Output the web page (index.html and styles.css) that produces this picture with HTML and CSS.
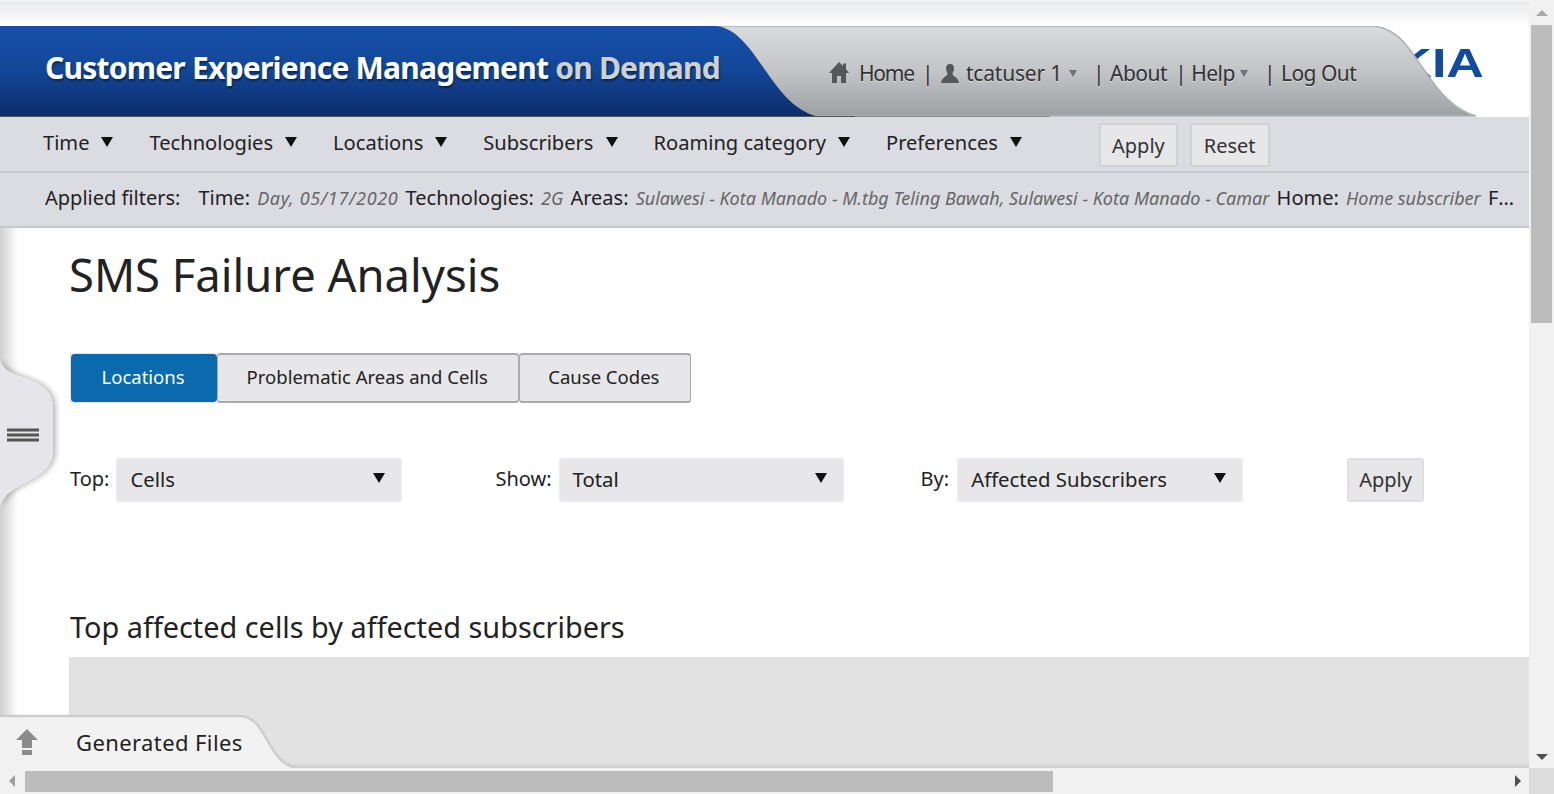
FILE: index.html
```html
<!DOCTYPE html>
<html>
<head>
    <title>SMS Failure Analysis</title>
    <link rel="stylesheet" href="styles.css">
</head>
<body>
    <div class="window">
        <div class="viewport">
            <div class="page">
                <div class="topstrip"></div>
                <header class="banner">
                    <div class="logo">KIA</div>
                    <svg class="swoop" width="1529" height="91" viewBox="0 0 1529 91">
                        <defs>
                            <linearGradient id="blue" x1="0" y1="0" x2="0" y2="1">
                                <stop offset="0" stop-color="#1550aa"/>
                                <stop offset="0.5" stop-color="#124797"/>
                                <stop offset="1" stop-color="#0c2c6c"/>
                            </linearGradient>
                            <linearGradient id="grey" x1="0" y1="0" x2="0" y2="1">
                                <stop offset="0" stop-color="#dadbdd"/>
                                <stop offset="0.5" stop-color="#c2c4c6"/>
                                <stop offset="1" stop-color="#9da1a4"/>
                            </linearGradient>
                        </defs>
                        <path d="M700 0 H1372 C1400 2 1410 25 1425 45 C1440 68 1455 84 1476 90 H800 Z" fill="url(#grey)" stroke="#aeb0b2" stroke-width="1.500"/>
                        <path d="M0 0 H716 C756 4 770 78 816 90 H0 Z" fill="url(#blue)"/>
                        <path d="M0 90.500 H855" stroke="#555" stroke-width="1"/>
                        <path d="M855 90.500 H1050" stroke="#888" stroke-width="1"/>
                    </svg>
                    <h1 class="apptitle">Customer Experience Management <span class="ondemand">on Demand</span></h1>
                    <div class="usermenu">
                        <svg class="ico ico-home" width="20" height="22" viewBox="0 0 20 22"><path d="M10 0 L14 4 V1.500 H17 V7 L20 11 H17 V21 H12 V14 H8 V21 H3 V11 H0 Z" fill="#55585a"/></svg>
                        <span class="home">Home</span>
                        <span class="sep">|</span>
                        <svg class="ico ico-user" width="18" height="19" viewBox="0 0 18 19"><path d="M9 0 C12 0 13 2 13 4.500 C13 7 11.500 8.500 11.500 10 C11.500 12 17 13 18 19 H0 C1 13 6.500 12 6.500 10 C6.500 8.500 5 7 5 4.500 C5 2 6 0 9 0 Z" fill="#55585a"/></svg>
                        <span class="uname">tcatuser 1</span>
                        <span class="caret"></span>
                        <span class="sep sep-wide">|</span>
                        <span>About</span>
                        <span class="sep">|</span>
                        <span>Help</span>
                        <span class="caret caret-help"></span>
                        <span class="sep sep-wide">|</span>
                        <span>Log Out</span>
                    </div>
                </header>
                <nav class="filterbar">
                    <ul class="filtermenu">
                        <li>Time<span class="arrow"></span></li>
                        <li>Technologies<span class="arrow"></span></li>
                        <li>Locations<span class="arrow"></span></li>
                        <li>Subscribers<span class="arrow"></span></li>
                        <li>Roaming category<span class="arrow"></span></li>
                        <li>Preferences<span class="arrow"></span></li>
                    </ul>
                    <button class="btn">Apply</button>
                    <button class="btn btn-reset">Reset</button>
                </nav>
                <div class="applied">
                    <span class="applied-title">Applied filters:</span>
                    <div class="applied-list">Time: <i class="date">Day, 05/17/2020</i> Technologies: <i>2G</i> Areas: <i>Sulawesi - Kota Manado - M.tbg Teling Bawah, Sulawesi - Kota Manado - Camar</i> Home: <i>Home subscriber</i> Failure: <i>All</i></div>
                </div>
                <main class="content">
                    <h2 class="pagetitle">SMS Failure Analysis</h2>
                    <div class="tabs">
                        <div class="tab tab-active">Locations</div>
                        <div class="tab tab-wide">Problematic Areas and Cells</div>
                        <div class="tab tab-last">Cause Codes</div>
                    </div>
                    <div class="controls">
                        <div class="ctl ctl-top"><span class="ctl-label">Top:</span>
                            <span class="sel"><span>Cells</span><span class="arrow sel-arrow"></span></span>
                        </div>
                        <div class="ctl ctl-show"><span class="ctl-label">Show:</span>
                            <span class="sel"><span>Total</span><span class="arrow sel-arrow"></span></span>
                        </div>
                        <div class="ctl ctl-by"><span class="ctl-label">By:</span>
                            <span class="sel"><span>Affected Subscribers</span><span class="arrow sel-arrow"></span></span>
                        </div>
                        <button class="btn btn-apply">Apply</button>
                    </div>
                    <h3 class="charttitle">Top affected cells by affected subscribers</h3>
                    <div class="chart"></div>
                </main>
            </div>

            <div class="sideshadow"></div>
            <svg class="handle" width="60" height="160" viewBox="0 0 60 160">
                <defs>
                    <filter id="soft" x="-30%" y="-10%" width="160%" height="120%"><feDropShadow dx="2" dy="0" stdDeviation="3" flood-color="#000" flood-opacity="0.35"/></filter>
                </defs>
                <path d="M0 2 C6 25 53 15 53 50 V92 C53 125 6 122 0 150 Z" fill="#e6e6ea" filter="url(#soft)"/>
                <path d="M7 72 H39 M7 77 H39 M7 82 H39" stroke="#555" stroke-width="3"/>
            </svg>

            <div class="generated">
                <svg class="gen-shape" width="310" height="60" viewBox="0 0 310 60">
                    <path d="M0 8 H240 C268 9 266 55 297 60 H0 Z" fill="#f2f2f2"/>
                    <path d="M0 8 H240 C268 9 266 55 297 60" fill="none" stroke="#cdcdcd" stroke-width="2.500"/>
                </svg>
                <svg class="gen-icon" width="22" height="26" viewBox="0 0 22 26"><path d="M11 0 L22 11 H16 V19 H6 V11 H0 Z M6 21 H16 V26 H6 Z" fill="#8b8b8b"/></svg>
                <span class="gen-label">Generated Files</span>
            </div>
        </div>

        <div class="vscroll">
            <span class="sb-btn sb-up"></span>
            <div class="vthumb"></div>
            <span class="sb-btn sb-down"></span>
        </div>

        <div class="hscroll">
            <span class="sb-btn sb-left"></span>
            <div class="hthumb"></div>
            <span class="sb-btn sb-right"></span>
        </div>
        <div class="corner"></div>
    </div>
</body>
</html>
```

FILE: styles.css
```css
* {
    box-sizing: border-box;
}
html, body {
    margin: 0;
    height: 100%;
    overflow: hidden;
}
body {
    background-color: white;
    color: #222;
    font-family: "Noto Sans", "Open Sans", sans-serif;
}
.window {
    display: grid;
    grid-template-columns: 1529px 25px;
    grid-template-rows: 768px 26px;
    height: 794px;
}

/* page area */
.viewport {
    position: relative;
    overflow: hidden;
}
.topstrip {
    height: 26px;
    background: linear-gradient(#e9eaec, #ffffff);
    border-top: 2px solid #f4f4f4;
}
.banner {
    position: relative;
    height: 91px;
    display: flex;
    align-items: flex-start;
}
.swoop {
    position: absolute;
    left: 0;
    top: 0;
}
.logo {
    position: absolute;
    right: 45px;
    top: 17px;
    color: #124aa0;
    font-family: "Liberation Sans", sans-serif;
    font-weight: bold;
    font-size: 40px;
    line-height: 40px;
    transform: scaleX(1.3);
    transform-origin: right;
}
.apptitle {
    position: relative;
    margin: 20px 0 0 45px;
    width: 700px;
    font-size: 30px;
    line-height: 44px;
    font-weight: 700;
    letter-spacing: -0.77px;
    color: white;
    white-space: nowrap;
    text-shadow: 1px 2px 2px rgba(0, 0, 0, 0.45);
}
.ondemand {
    color: #cfd1d3;
}
.usermenu {
    position: relative;
    margin: 33px 0 0 84px;
    display: flex;
    align-items: center;
    gap: 7px;
    font-size: 21px;
    line-height: 28px;
    color: #333;
    white-space: nowrap;
    letter-spacing: -0.5px;
    text-shadow: 0 1px 0 rgba(255, 255, 255, 0.5);
}
.ico {
    flex: none;
}
.ico-home {
    margin-right: 3px;
}
.ico-user {
    margin-left: 3px;
}
.home {
    letter-spacing: -1.2px;
}
.uname {
    letter-spacing: -0.2px;
}
.caret {
    width: 0;
    height: 0;
    border-style: solid;
    border-width: 7px 4.500px 0;
    border-color: #707275 transparent transparent;
}
.caret-help {
    margin-left: -2px;
}
.sep {
    width: 8px;
    margin: 0 1px;
    text-align: center;
}
.sep-wide {
    margin: 0 2px 0 9px;
}

/* filter bars */
.filterbar {
    height: 56px;
    display: flex;
    align-items: flex-start;
    background-color: #dbdce1;
    border-bottom: 2px solid #c6c8cc;
}
.filtermenu {
    display: flex;
    gap: 36px;
    margin: 11px 0 0 43px;
    padding: 0;
    list-style: none;
    font-size: 20.1px;
    line-height: 30px;
    width: 1056px;
}
.filtermenu li {
    display: flex;
    align-items: center;
}
.arrow {
    display: inline-block;
    width: 0;
    height: 0;
    margin: 0 0 3px 12px;
    border-style: solid;
    border-width: 10px 6px 0;
    border-color: #111 transparent transparent;
}
.btn {
    font-family: inherit;
    font-size: 20px;
    color: #333;
    height: 44px;
    padding: 0 11px;
    background-color: #e7e6e8;
    border: 2px solid #d0d1d5;
    border-radius: 3px;
}
.filterbar .btn {
    margin-top: 6px;
}
.btn-reset {
    margin-left: 12px;
    padding: 0 12px;
}
.applied {
    height: 55px;
    display: flex;
    align-items: center;
    gap: 18px;
    padding: 0 12px 4px 45px;
    background-color: #dbdce1;
    border-bottom: 2px solid #c6c8cc;
    font-size: 20px;
    white-space: nowrap;
}
.applied-title {
    flex: none;
}
.applied-list {
    flex: 1;
    min-width: 0;
    overflow: hidden;
    text-overflow: ellipsis;
}
.applied-list i {
    color: #666;
    font-size: 18px;
    margin: 0 2px;
}
.applied-list .date {
    letter-spacing: 0.65px;
}

/* content */
.content {
    padding: 0 0 0 70px;
}
.pagetitle {
    margin: 16px 0 0 -1px;
    font-size: 45.4px;
    line-height: 60px;
    font-weight: 400;
}
.tabs {
    display: inline-flex;
    margin-top: 49px;
    vertical-align: top;
    background-color: #e6e6e6;
}
.tab {
    height: 50px;
    display: flex;
    align-items: center;
    font-size: 18.5px;
    background-color: #e7e6e8;
    border: 2px solid #aaa;
    border-width: 2px 1px;
    border-radius: 4px;
}
.tab-wide {
    padding: 0 30px 3px 28.500px;
}
.tab-last {
    padding: 0 31px 3px 28.500px;
}
.tab-active {
    margin: 1px 0 0 1px;
    padding: 0 32.500px 3px 30.500px;
    height: 48px;
    background-color: #0a6aad;
    color: white;
    border: 0;
}
.controls {
    display: flex;
    align-items: center;
    margin-top: 55px;
    height: 44px;
    font-size: 20px;
}
.ctl {
    display: flex;
    align-items: center;
    gap: 8px;
}
.ctl-top {
    gap: 7px;
}
.ctl-show {
    margin-left: 93px;
    gap: 7px;
}
.ctl-by {
    margin-left: 77px;
}
.ctl-label {
    margin-bottom: 3px;
}
.sel {
    display: flex;
    justify-content: space-between;
    align-items: center;
    width: 286px;
    height: 44px;
    padding: 0 16px 2px 13px;
    background-color: #e7e6e8;
    border: 1px solid #ececee;
    border-radius: 3px;
    font-size: 20.3px;
}
.ctl-show .sel {
    width: 285px;
}
.sel-arrow {
    margin-left: 0;
}
.btn-apply {
    margin-left: 104px;
    padding: 0 10px 2px;
    border-color: #e0e0e2;
}
.charttitle {
    margin: 103px 0 0 0;
    font-size: 28.85px;
    line-height: 44px;
    font-weight: 400;
}
.chart {
    height: 111px;
    margin: 8px 0 0 -1px;
    background: linear-gradient(#e2e2e2 95%, #cfcfcf);
}

/* overlays on the page */
.sideshadow {
    position: absolute;
    left: 0;
    top: 228px;
    width: 18px;
    height: 490px;
    background: linear-gradient(to right, #cfcfcf, rgba(255, 255, 255, 0));
}
.handle {
    position: absolute;
    left: 0;
    top: 358px;
}
.generated {
    position: absolute;
    left: 0;
    bottom: 0;
    width: 310px;
    height: 60px;
    display: flex;
    align-items: center;
    padding-top: 8px;
}
.gen-shape {
    position: absolute;
    left: 0;
    top: 0;
}
.gen-icon {
    position: relative;
    margin-left: 16px;
}
.gen-label {
    position: relative;
    margin-left: 38px;
    font-size: 22px;
    letter-spacing: 0.4px;
}

/* scrollbars */
.vscroll {
    grid-column: 2;
    grid-row: 1;
    background-color: #f1f1f1;
    display: flex;
    flex-direction: column;
    align-items: center;
}
.vthumb {
    width: 21px;
    height: 298px;
    background-color: #bcbcbc;
}
.hscroll {
    grid-column: 1;
    grid-row: 2;
    background-color: #f1f1f1;
    display: flex;
    align-items: center;
}
.hthumb {
    width: 1028px;
    height: 21px;
    background-color: #bcbcbc;
}
.corner {
    grid-column: 2;
    grid-row: 2;
    background-color: #dcdcdc;
}
.sb-btn {
    flex: none;
    width: 0;
    height: 0;
    border: 0 solid transparent;
}
.sb-up {
    margin: 10px 0 9px;
    border-width: 0 6px 6px;
    border-bottom-color: #a8a8a8;
}
.sb-down {
    margin-top: auto;
    margin-bottom: 8px;
    border-width: 6px 6px 0;
    border-top-color: #505050;
}
.sb-left {
    margin: 0 10px 0 9px;
    border-width: 6px 6px 6px 0;
    border-right-color: #a0a0a0;
}
.sb-right {
    margin-left: auto;
    margin-right: 8px;
    border-width: 6px 0 6px 6px;
    border-left-color: #505050;
}
```
